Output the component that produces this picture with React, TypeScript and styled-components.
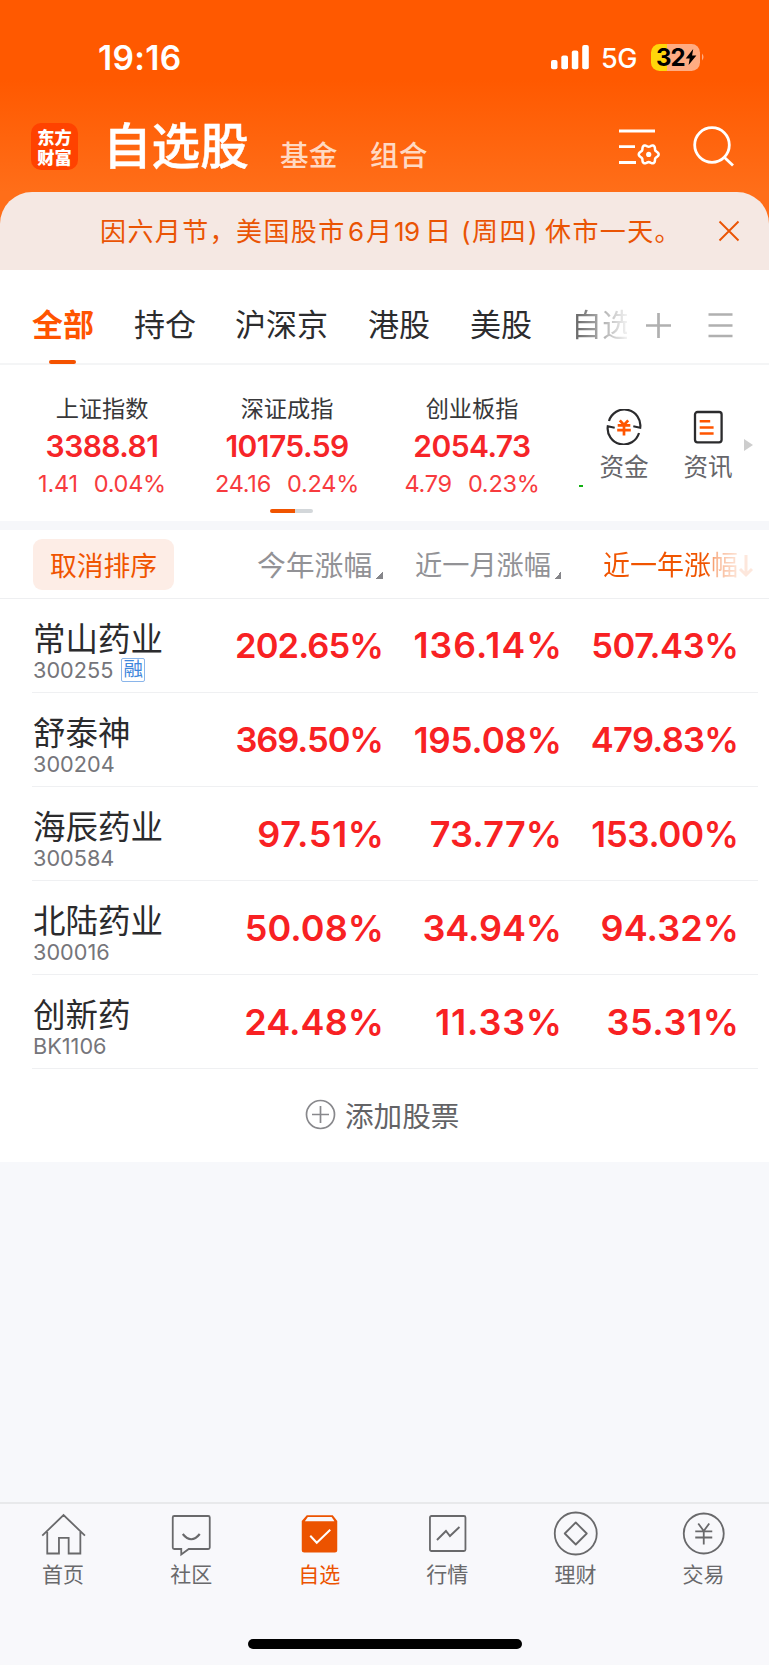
import React from 'react';
import styled, { createGlobalStyle } from 'styled-components';

const Global = createGlobalStyle`
  * { box-sizing: border-box; }
  body { margin: 0; background: #f7f8fb; font-family: Inter, "Noto Sans CJK SC", sans-serif; }
  svg { display: block; flex: none; }
`;

const Screen = styled.div`
  width: 769px; height: 1665px; display: flex; flex-direction: column;
  background: #f7f8fb; overflow: hidden; white-space: nowrap;
`;
const Header = styled.header`
  height: 270px; background: linear-gradient(#ff5900 0, #ff5900 80px, #ff6e19 192px, #ff6e19 230px);
`;
const StatusBar = styled.div`
  height: 114px; padding: 0 64px 0 98px; display: flex; align-items: center; color: #fff;
`;
const Clock = styled.div`
  flex: 1; font-size: 33.5px; line-height: 40px; font-weight: 600; letter-spacing: 0.35px; padding-top: 1px;
`;
const Network = styled.div`
  margin: 3px 12px 0 12px; width: 38px; font-size: 27px; line-height: 30px; font-weight: 500; letter-spacing: -0.5px;
`;
const Battery = styled.div`
  width: 49px; height: 27px; border-radius: 8.5px; display: flex; align-items: center; padding-left: 5px;
  background: linear-gradient(90deg, #ffd60a 16px, #ffac82 16px);
  color: #000; font-size: 24px; font-weight: 700; letter-spacing: -1px; line-height: 27px;
`;
const TitleRow = styled.div`
  height: 78px; display: flex; padding: 0 35px 0 31px; align-items: flex-start;
`;
const Logo = styled.div`
  width: 47px; height: 47px; margin-top: 9px; border-radius: 10px; background: #ff4200; color: #fff;
  font: 900 17.2px/19.5px "Noto Sans CJK SC", sans-serif; text-align: center; padding-top: 4px;
`;
const Title = styled.h1`
  margin: 0 0 0 25px; width: 149px; font-size: 48.6px; line-height: 66px; font-weight: 500; color: #fff; -webkit-text-stroke: 0.5px #fff;
`;
const HeaderLink = styled.span<{ $w: number; $gap?: number }>`
  margin-left: ${p => p.$gap ?? 0}px; width: ${p => p.$w}px; font-size: 28.7px; line-height: 40px; padding-top: 22px; font-weight: 500; color: #ffd9c3;
`;
const HeaderTools = styled.div`
  margin-left: auto; display: flex; gap: 32px; padding-top: 11px;
`;
const Notice = styled.div`
  height: 78px; border-radius: 32px 32px 0 0; background: #f5e8e3; display: flex; align-items: center;
  padding: 0 29px 0 100px; color: #ea5404; font-size: 26px;
`;
const NoticeText = styled.div` flex: 1; padding-bottom: 3px; display: flex; align-items: baseline; `;
const Part = styled.span<{ $w: number; $ls?: number }>`
  width: ${p => p.$w}px; letter-spacing: ${p => p.$ls ?? 1.4}px;
`;

const Tabs = styled.nav`
  height: 95px; background: #fff; border-bottom: 2px solid #f4f5f6; display: flex; padding-left: 32px; position: relative;
`;
const Tab = styled.div<{ $w: number; $active?: boolean }>`
  width: ${p => p.$w}px; height: 95px; padding-top: 32px; position: relative;
  font-size: 31px; line-height: 46px; color: ${p => (p.$active ? '#ff5400' : '#2c2c2e')};
  font-weight: ${p => (p.$active ? 700 : 400)};
  &::after {
    content: ''; display: ${p => (p.$active ? 'block' : 'none')};
    position: absolute; left: 17px; top: 90px; width: 27px; height: 4px; border-radius: 2px; background: #f45200;
  }
`;
const FadedTab = styled.div`
  width: 56px; overflow: hidden; margin-right: 18px; padding-top: 32px; font-size: 31px; line-height: 46px;
  color: transparent; background: linear-gradient(90deg, #5c5c5c 0, #f2f2f2 56px); background-clip: text; -webkit-background-clip: text;
`;
const TabTools = styled.div`
  display: flex; gap: 36px; padding-top: 42px;
`;

const Indices = styled.section`
  height: 156px; background: #fff; display: flex; position: relative; align-items: flex-start;
`;
const IndexCard = styled.div<{ $w: number }>`
  width: ${p => p.$w}px; padding-top: 27px; display: flex; flex-direction: column; align-items: center; color: #f62528;
`;
const IndexName = styled.div` font-size: 23.2px; line-height: 34px; color: #38383a; `;
const IndexValue = styled.div` font-size: 30px; line-height: 38px; font-weight: 600; margin-top: 1px; letter-spacing: -0.55px; `;
const IndexChange = styled.div`
  display: flex; gap: 16px; font-size: 23.5px; line-height: 32px; margin-top: 3px; letter-spacing: -0.25px; color: #f73b3e;
`;
const Pager = styled.div`
  position: absolute; left: 270px; top: 144px; width: 43px; height: 4px; border-radius: 2px;
  background: linear-gradient(90deg, #f05400 25px, #d3d7da 25px);
`;
const Dash = styled.div` width: 4px; height: 2px; background: #12b012; margin: 120px 7px 0 5px; `;
const Shortcut = styled.div<{ $w: number }>`
  width: ${p => p.$w}px; display: flex; flex-direction: column; align-items: center; padding-top: 44px;
  font-size: 24.6px; line-height: 36px; color: #66666a; gap: 4px;
`;
const Shortcuts = styled.div` display: flex; align-items: flex-start; margin-left: -1px; `;
const More = styled.div`
  margin: 74px 0 0 -13px; border-left: 9px solid #cdcdcd; border-top: 6px solid transparent; border-bottom: 6px solid transparent;
`;
const Band = styled.div` height: 9px; background: #f6f7fa; `;

const GridRow = styled.div`
  display: grid; grid-template-columns: 205px 178px 178px 177px;
`;
const TableHead = styled(GridRow)`
  height: 69px; background: #fff; border-bottom: 1px solid #eeeff1; align-items: center; padding-top: 1px;
`;
const ResetButton = styled.button`
  margin-left: 33px; width: 141px; height: 51px; border: 0; border-radius: 9px; background: #fdede6; color: #f05400;
  font: 400 26.8px/50px "Noto Sans CJK SC", sans-serif; padding: 0;
`;
const HeadCell = styled.div<{ $size: number; $left: number }>`
  display: flex; font-size: ${p => p.$size}px; line-height: 42px; padding-left: ${p => p.$left}px; padding-top: 2px; color: #929296;
`;
const SortMark = styled.i`
  width: 8px; height: 8px; margin: 26px 0 0 4px; background: linear-gradient(135deg, transparent 50%, #86868a 50%);
`;
const SortedHead = styled.div`
  display: flex; align-items: center; width: 160px; padding: 2px 0 0 42px; font-size: 27px; line-height: 42px; color: #ef5800;
`;
const SortedLabel = styled.span`
  color: transparent; background: linear-gradient(90deg, #f05400 104px, #f8b38e 112px, #fde5d8 135px); background-clip: text; -webkit-background-clip: text;
`;

const Row = styled(GridRow)`
  height: 94px; background: #fff; position: relative;
  &::after { content: ''; position: absolute; left: 32px; right: 11px; bottom: 0; height: 1px; background: #eff0f2; }
`;
const Stock = styled.div` padding: 17px 0 0 33px; `;
const StockName = styled.div` font-size: 32.5px; line-height: 48px; color: #2b2b2d; `;
const StockCode = styled.div`
  display: flex; align-items: center; height: 24px; margin-top: -6px; font-size: 21.7px; line-height: 24px; color: #75757a; gap: 8px;
`;
const Badge = styled.span`
  width: 24px; height: 24px; border: 1.5px solid #8ab5ea; border-radius: 2px; font-size: 19.5px; line-height: 21px; color: #3f87dc; display: flex; justify-content: center;
`;
const Percent = styled.div<{ $size: number; $track: number }>`
  padding-top: 24.500px; font-size: ${p => p.$size}px; letter-spacing: ${p => p.$track}px; margin-right: ${p => -1 - p.$track}px;
  line-height: 44px; font-weight: 600; color: #f82123; text-align: right;
`;
const AddStock = styled.div`
  height: 93px; background: #fff; display: flex; align-items: center; padding: 0 0 2px 305px; gap: 9px; font-size: 28.6px; color: #636366;
`;
const Filler = styled.div` flex: 1; `;
const TabBar = styled.footer`
  height: 163px; border-top: 2px solid #e8e9eb; background: #f8f8fb; padding-top: 8px;
`;
const BarItems = styled.div` display: grid; grid-template-columns: repeat(6, 128.1px); height: 128px; margin-left: -1px; `;
const BarItem = styled.div<{ $active?: boolean }>`
  display: flex; flex-direction: column; align-items: center; gap: 3px; font-size: 21px; line-height: 34px;
  color: ${p => (p.$active ? '#ec5300' : '#69696b')};
`;
const HomeIndicator = styled.div` width: 274px; height: 10px; border-radius: 5px; background: #000; margin: -1px auto 0; `;

const Signal = () => (
  <svg width="39" height="26" viewBox="0 0 39 26" fill="#fff">
    <rect x="1" y="16" width="6.5" height="9.3" rx="2" /><rect x="11.3" y="11.5" width="6.7" height="13.8" rx="2" />
    <rect x="21.8" y="6.5" width="6.5" height="18.8" rx="2" /><rect x="32.2" y="1" width="6.6" height="24.3" rx="2" />
  </svg>
);
const Bolt = () => (
  <svg width="12" height="18" viewBox="0 0 12 18"><path d="M8.2 1 .7 10.4h4L3.6 17 11.4 7.4H7.1Z" fill="#000" /></svg>
);
// Six-lobed gear outline, traced around its centre.
const gear = Array.from({ length: 72 }, (_, i) => {
  const a = (i * Math.PI) / 36;
  const r = 8.8 + 1.15 * Math.cos(6 * a);
  return `${(29.7 + r * Math.cos(a)).toFixed(2)},${(29.4 + r * Math.sin(a)).toFixed(2)}`;
}).join(' ');
const FilterIcon = () => (
  <svg width="42" height="42" viewBox="0 0 42 42" fill="none" stroke="#fff" strokeWidth="2.8">
    <path d="M0 6h36M0 21.700h16M0 37.500h17" />
    <polygon points={gear} strokeWidth="2.500" strokeLinejoin="round" />
    <circle cx="29.700" cy="29.400" r="2.600" fill="#fff" stroke="none" />
  </svg>
);
const SearchIcon = () => (
  <svg width="41" height="42" viewBox="0 0 41 42" fill="none" stroke="#fff" strokeWidth="2.8">
    <circle cx="19" cy="20" r="17.3" /><path d="m31 32 9 8.5" />
  </svg>
);
const CloseIcon = () => (
  <svg width="22" height="22" viewBox="0 0 22 22" stroke="#ea5404" strokeWidth="1.9"><path d="m1.5 1.5 19 19m0-19-19 19" /></svg>
);
const FundIcon = () => (
  <svg width="36" height="36" viewBox="0 0 36 36" fill="none" stroke="#2b2b2d" strokeWidth="2.2">
    <path d="M3 12a16 16 0 0 1 31.2 6.7l-6.9-1.5M33 24A16 16 0 0 1 1.8 17.3l6.9 1.5" />
    <path stroke="#ff5500" strokeWidth="2.7" d="m13.800 11.300 4.200 4.700 4.200-4.700M11.700 16.400h12.600M11.200 21.200h13.600M18 16v10.500" />
  </svg>
);
const NewsIcon = () => (
  <svg width="36" height="36" viewBox="0 0 36 36" fill="none" stroke="#2b2b2d" strokeWidth="2.3">
    <rect x="5" y="3" width="26.6" height="30.3" rx="2.5" />
    <path stroke="#ff5500" strokeWidth="2.6" d="M9.700 12.3h10.5M9.700 18.5h13.9M9.700 24.5h13.9" />
  </svg>
);
const AddIcon = () => (
  <svg width="31" height="31" viewBox="0 0 31 31" fill="none" stroke="#88888c" strokeWidth="1.7">
    <circle cx="15.5" cy="15.5" r="14" /><path d="M15.5 7v17M7 15.5h17" />
  </svg>
);

const barIcons: Record<string, React.ReactNode> = {
  首页: <path d="m1 23.2 21.3-20.7L43.7 23.2M6 19.5V41h11.7V25.3h9.7V41h11.7V19.5" />,
  社区: <><path d="M5 3.5h34a1.5 1.5 0 0 1 1.5 1.5v30a1.5 1.5 0 0 1-1.5 1.5H19.5L12 42v-5.5H5A1.5 1.5 0 0 1 3.5 35V5A1.5 1.5 0 0 1 5 3.5Z" /><path d="M13.5 21.5q8.500 10.500 17 0" strokeWidth="2.2" /></>,
  自选: <><path d="M9.500 2.800h26l4.500 5.700v29a2.500 2.500 0 0 1-2.500 2.500H7a2.500 2.500 0 0 1-2.500-2.500v-29Z" fill="#ec5300" stroke="none" /><path d="M10.600 4.400h23.800l2.800 4.300H7.600Z" fill="#f8f8fb" stroke="none" /><path d="m13 23.200 6.500 7 13.500-13" stroke="#fff" strokeWidth="2" /></>,
  行情: <><rect x="4.700" y="3.5" width="35.5" height="35" rx="1.5" /><path d="m11.700 27.500 9-9 4 5 9.500-9" strokeWidth="1.9" /></>,
  理财: <><circle cx="22.500" cy="21" r="21" /><path d="M22.500 10 33.500 21 22.500 32 11.500 21Z" strokeLinejoin="round" /></>,
  交易: <><circle cx="22.500" cy="21" r="20" /><path d="m17 11 5.500 7.500 5.500-7.500M14 18.800h17M14 25h17M22.500 18.500V32" /></>,
};
const BarIcon = ({ name }: { name: string }) => (
  <svg width="45" height="43" viewBox="0 -0.5 44.5 43" fill="none" stroke="#69696b" strokeWidth="1.8" overflow="visible">{barIcons[name]}</svg>
);

const indices = [
  { name: '上证指数', value: '3388.81', diff: '1.41', pct: '0.04%', w: 204 },
  { name: '深证成指', value: '10175.59', diff: '24.16', pct: '0.24%', w: 166 },
  { name: '创业板指', value: '2054.73', diff: '4.79', pct: '0.23%', w: 204 },
];

type Cell = [text: string, size: number, track: number];
const stocks: { name: string; code: string; margin?: boolean; values: Cell[] }[] = [
  { name: '常山药业', code: '300255', margin: true, values: [['202.65%', 34.5, -0.87], ['136.14%', 35.5, 1.15], ['507.43%', 34.5, -0.36]] },
  { name: '舒泰神', code: '300204', values: [['369.50%', 34.5, -1.05], ['195.08%', 35, -0.15], ['479.83%', 34.5, -0.7]] },
  { name: '海辰药业', code: '300584', values: [['97.51%', 36, 0.6], ['73.77%', 36, 0.2], ['153.00%', 35, -0.35]] },
  { name: '北陆药业', code: '300016', values: [['50.08%', 36, 0.1], ['34.94%', 36, -0.1], ['94.32%', 36, 0.1]] },
  { name: '创新药', code: 'BK1106', values: [['24.48%', 36, 0.1], ['11.33%', 36, 0.8], ['35.31%', 36, 0.6]] },
];

export default function App() {
  return (
    <Screen>
      <Global />
      <Header>
        <StatusBar>
          <Clock>19:16</Clock>
          <Signal />
          <Network>5G</Network>
          <Battery>32<Bolt /></Battery>
          <svg width="5" height="10" viewBox="0 0 5 10"><path d="M2 1.500q3 3.500 0 7Z" fill="#ffac82" /></svg>
        </StatusBar>
        <TitleRow>
          <Logo>东方<br />财富</Logo>
          <Title>自选股</Title>
          <HeaderLink $w={90} $gap={28}>基金</HeaderLink>
          <HeaderLink $w={60}>组合</HeaderLink>
          <HeaderTools><FilterIcon /><SearchIcon /></HeaderTools>
        </TitleRow>
        <Notice>
          <NoticeText>
            <Part $w={136}>因六月节，</Part>
            <Part $w={112}>美国股市</Part>
            <Part $w={18}>6</Part>
            <Part $w={28}>月</Part>
            <Part $w={31} $ls={-0.5}>19</Part>
            <Part $w={36}>日</Part>
            <Part $w={11}>(</Part>
            <Part $w={56}>周四</Part>
            <Part $w={17}>)</Part>
            <Part $w={140}>休市一天。</Part>
          </NoticeText>
          <CloseIcon />
        </Notice>
      </Header>
      <Tabs>
        <Tab $w={102} $active>全部</Tab>
        <Tab $w={101}>持仓</Tab>
        <Tab $w={133}>沪深京</Tab>
        <Tab $w={102}>港股</Tab>
        <Tab $w={101}>美股</Tab>
        <FadedTab>自选</FadedTab>
        <TabTools>
          <svg width="27" height="27" viewBox="0 0 27 27" stroke="#b0b0b0" strokeWidth="2.7"><path d="M13.500 1v25M1 13.500h25" /></svg>
          <svg width="25" height="27" viewBox="0 0 25 27" stroke="#b0b0b0" strokeWidth="2.5"><path d="M.5 2.500h24M.5 13.500h24M.5 24h24" /></svg>
        </TabTools>
      </Tabs>
      <Indices>
        {indices.map(i => (
          <IndexCard key={i.name} $w={i.w}>
            <IndexName>{i.name}</IndexName>
            <IndexValue>{i.value}</IndexValue>
            <IndexChange><span>{i.diff}</span><span>{i.pct}</span></IndexChange>
          </IndexCard>
        ))}
        <Dash />
        <Shortcuts>
          <Shortcut $w={70}><FundIcon />资金</Shortcut>
          <Shortcut $w={98}><NewsIcon />资讯</Shortcut>
        </Shortcuts>
        <More />
        <Pager />
      </Indices>
      <Band />
      <TableHead>
        <ResetButton>取消排序</ResetButton>
        <HeadCell $size={28.8} $left={52}>今年涨幅<SortMark /></HeadCell>
        <HeadCell $size={27.2} $left={32}>近一月涨幅<SortMark /></HeadCell>
        <SortedHead>
          <SortedLabel>近一年涨幅</SortedLabel>
          <svg width="16" height="24" viewBox="0 0 16 24" fill="none" stroke="#fde7dc" strokeWidth="3"><path d="M8 1v20M2 15l6 6 6-6" /></svg>
        </SortedHead>
      </TableHead>
      {stocks.map(s => (
        <Row key={s.code}>
          <Stock>
            <StockName>{s.name}</StockName>
            <StockCode>{s.code}{s.margin && <Badge>融</Badge>}</StockCode>
          </Stock>
          {s.values.map(([text, size, track]) => <Percent key={text} $size={size} $track={track}>{text}</Percent>)}
        </Row>
      ))}
      <AddStock><AddIcon />添加股票</AddStock>
      <Filler />
      <TabBar>
        <BarItems>
          {Object.keys(barIcons).map(n => (
            <BarItem key={n} $active={n === '自选'}><BarIcon name={n} />{n}</BarItem>
          ))}
        </BarItems>
        <HomeIndicator />
      </TabBar>
    </Screen>
  );
}
